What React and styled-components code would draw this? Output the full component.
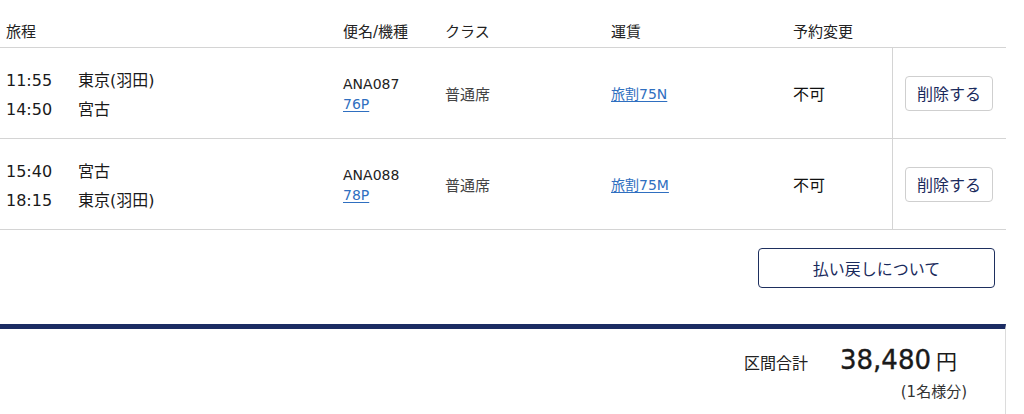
import React from 'react'
import styled, { createGlobalStyle } from 'styled-components'

const GlobalStyle = createGlobalStyle`
  body {
    margin: 0;
    background: #fff;
    font-family: "DejaVu Sans", "Noto Sans CJK JP", sans-serif;
    color: #222;
  }
`

const flights = [
  {
    legs: [
      { time: '11:55', place: '東京(羽田)' },
      { time: '14:50', place: '宮古' },
    ],
    flight: 'ANA087',
    plane: '76P',
    seat: '普通席',
    fare: '旅割75N',
    change: '不可',
  },
  {
    legs: [
      { time: '15:40', place: '宮古' },
      { time: '18:15', place: '東京(羽田)' },
    ],
    flight: 'ANA088',
    plane: '78P',
    seat: '普通席',
    fare: '旅割75M',
    change: '不可',
  },
]

const cols = '343px 102px 166px 182px 99px 114px'

const App = () => {
  return (
    <Page>
      <GlobalStyle />
      <Table>
        <HeadRow>
          <HeadCell>旅程</HeadCell>
          <HeadCell>便名/機種</HeadCell>
          <HeadCell>クラス</HeadCell>
          <HeadCell>運賃</HeadCell>
          <HeadCell>予約変更</HeadCell>
          <HeadCell />
        </HeadRow>
        {flights.map((f) => (
          <Row key={f.flight}>
            <Cell>
              <Legs>
                {f.legs.map((l) => (
                  <Leg key={l.time}>
                    <Time>{l.time}</Time>
                    <Place>{l.place}</Place>
                  </Leg>
                ))}
              </Legs>
            </Cell>
            <Cell>
              <Flight>
                <span>{f.flight}</span>
                <Link href='#'>{f.plane}</Link>
              </Flight>
            </Cell>
            <Cell>
              <Seat>{f.seat}</Seat>
            </Cell>
            <Cell>
              <Link href='#'>{f.fare}</Link>
            </Cell>
            <Cell>
              <Strong>{f.change}</Strong>
            </Cell>
            <ActionCell>
              <DeleteButton type='button'>削除する</DeleteButton>
            </ActionCell>
          </Row>
        ))}
      </Table>
      <RefundBar>
        <RefundButton type='button'>払い戻しについて</RefundButton>
      </RefundBar>
      <Summary>
        <TotalLine>
          <TotalLabel>区間合計</TotalLabel>
          <Amount>38,480</Amount>
          <Yen>円</Yen>
        </TotalLine>
        <Per>(1名様分)</Per>
      </Summary>
    </Page>
  )
}

const Page = styled.div`
  width: 1006px;
`

const Table = styled.div`
  display: flex;
  flex-direction: column;
`

const HeadRow = styled.div`
  display: grid;
  grid-template-columns: ${cols};
  height: 48px;
  align-items: end;
  border-bottom: 1px solid #d4d4d4;
  box-sizing: border-box;
`

const HeadCell = styled.div`
  font-size: 15px;
  line-height: 20px;
  padding: 0 0 5px 0;
  color: #222;
  &:first-child {
    padding-left: 6px;
  }
`

const Row = styled.div`
  display: grid;
  grid-template-columns: ${cols};
  height: 91px;
  border-bottom: 1px solid #d4d4d4;
  box-sizing: border-box;
`

const Cell = styled.div`
  display: flex;
  align-items: center;
  font-size: 14px;
  &:first-child {
    padding-left: 6px;
  }
`

const ActionCell = styled(Cell)`
  border-left: 1px solid #d4d4d4;
  justify-content: center;
  padding-right: 1px;
`

const Legs = styled.div`
  display: flex;
  flex-direction: column;
  gap: 9px;
  padding-top: 4px;
`

const Leg = styled.div`
  display: flex;
  font-size: 16px;
  line-height: 20px;
  color: #1a1a1a;
`

const Time = styled.span`
  width: 72px;
`

const Place = styled.span``

const Flight = styled.div`
  display: flex;
  flex-direction: column;
  font-size: 14px;
  line-height: 20px;
  color: #222;
  padding-top: 2px;
`

const Link = styled.a`
  color: #2f6fc0;
  text-decoration: underline;
  text-underline-offset: 2px;
  font-size: 14px;
`

const Seat = styled.span`
  color: #444;
  font-size: 15px;
`

const Strong = styled.span`
  font-size: 16px;
  color: #111;
`

const DeleteButton = styled.button`
  width: 88px;
  height: 35px;
  background: #fff;
  border: 1px solid #cfcfcf;
  border-radius: 4px;
  font-family: inherit;
  font-size: 16px;
  color: #1a2a5c;
  padding: 0;
`

const RefundBar = styled.div`
  display: flex;
  justify-content: flex-end;
  padding: 18px 11px 36px 0;
`

const RefundButton = styled.button`
  width: 237px;
  height: 40px;
  background: #fff;
  border: 1px solid #1e2f5e;
  border-radius: 4px;
  font-family: inherit;
  font-size: 16px;
  color: #1a2a5c;
  padding: 0;
`

const Summary = styled.div`
  border-top: 5px solid #1b2c63;
  border-right: 1px solid #dcdcdc;
  display: flex;
  flex-direction: column;
  align-items: flex-end;
  padding: 16px 38px 20px 0;
  height: 100px;
  box-sizing: border-box;
`

const TotalLine = styled.div`
  display: flex;
  align-items: baseline;
  margin-right: 10px;
`

const TotalLabel = styled.span`
  font-size: 16px;
  margin-right: 32px;
  color: #222;
`

const Amount = styled.span`
  font-size: 26px;
  color: #1a1a1a;
  -webkit-text-stroke: 0.4px #1a1a1a;
`

const Yen = styled.span`
  font-size: 21px;
  margin-left: 5px;
  color: #1a1a1a;
`

const Per = styled.span`
  font-size: 15px;
  color: #333;
  margin-top: 5px;
`

export default App
